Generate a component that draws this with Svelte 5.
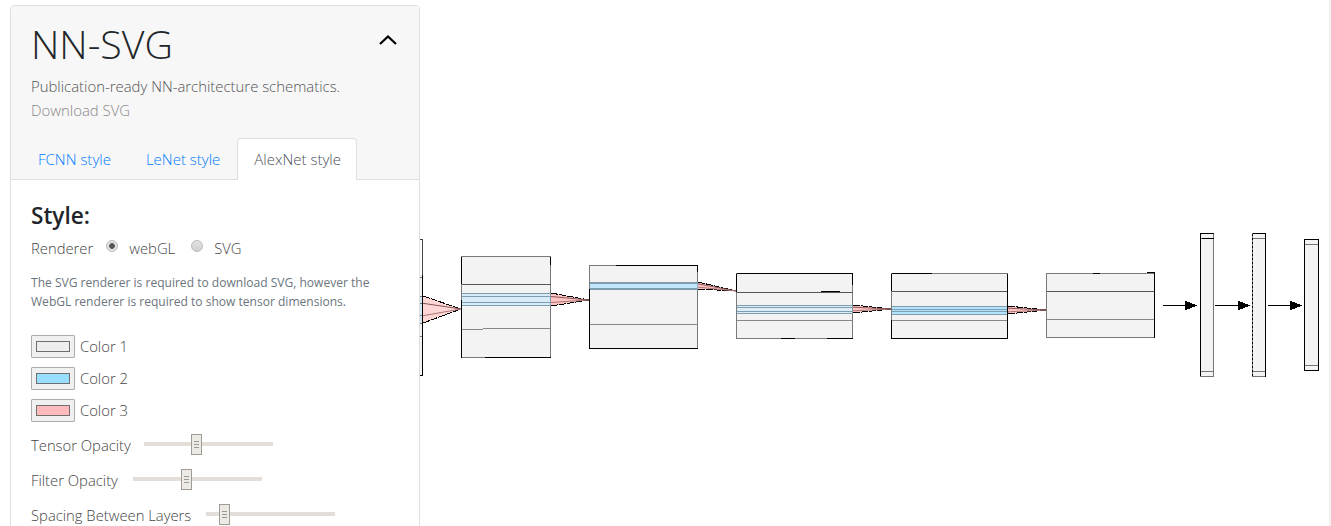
<script>
  let renderer = $state('webGL');

  const colors = [
    { label: 'Color 1', value: '#eeeeee' },
    { label: 'Color 2', value: '#99ddff' },
    { label: 'Color 3', value: '#ffbbbb' }
  ];

  const sliders = [
    { label: 'Tensor Opacity', width: 99, pos: 47 },
    { label: 'Filter Opacity', width: 88, pos: 48 },
    { label: 'Spacing Between Layers', width: 161, pos: 13 }
  ];

  // frame, inner lines, blue band, and `ink` = the stretches webGL drew in full black
  const layers = [
    {
      x: 461.5, y: 256.5, w: 89, h: 101,
      lines: [[284.5, '#555']],
      band: [293.5, 305.5, 296.5, 302.5], tint: 0.3,
      ink: 'M461.5 256.5V284M550.5 256.5V265M485 357.5H550.5M461.5 300V357.5',
      extra: 'M461.5 329.5H483M483 328.5H550.5'
    },
    {
      x: 589.5, y: 265.5, w: 108, h: 83,
      lines: [[324.5, '#888']],
      band: [282.5, 289.5, 283.5, 288.5], tint: 0.55,
      ink: 'M616 265.5H697.5V272M589.5 348.5H697.5M589.5 289V348.5'
    },
    {
      x: 736.5, y: 273.5, w: 116, h: 65,
      lines: [[292.5, '#555'], [320.5, '#888']],
      band: [305.5, 313.5, 307.5, 311.5], tint: 0.25,
      ink: 'M736.5 273.5H852.5V285M736.5 273.5V292M821 291.5H840M827 338.5H852.5M781 338.5H795'
    },
    {
      x: 891.5, y: 273.5, w: 116, h: 65,
      lines: [[291.5, '#555'], [320.5, '#888']],
      band: [306.5, 314.5, 309.5, 311.5], tint: 0.7,
      ink: 'M891.5 273.5H932M1007.5 273.5V338.5H891.5M891.5 273.5V291M891.5 320V338.5'
    },
    {
      x: 1046.5, y: 273.5, w: 108, h: 64,
      lines: [[291.5, '#555'], [319.5, '#888']],
      ink: 'M1147 272.5H1154.5V337.5M1093 273.5H1100'
    }
  ];

  const bars = [
    { x: 1200.5, y: 233.5, w: 13, h: 143, lines: [238.5, 371.5], ink: 'M1200.5 376V233.5H1213.5M1202 238.5H1213.5' },
    { x: 1252.5, y: 233.5, w: 13, h: 143, lines: [238.5, 371.5], ink: 'M1252.5 233.5H1265.5V376.5', dashed: true },
    { x: 1304.5, y: 239.5, w: 14, h: 131, lines: [244.5, 365.5], ink: 'M1304.5 370.5V239.5H1318.5V370.5H1304.5' }
  ];

  const filters = [
    [423, 296, 323, 461, 309, 0.6],
    [551, 293, 306, 589, 300, 0.85],
    [698, 282, 289, 736, 291, 0.85],
    [853, 305, 313, 891, 309, 0.85],
    [1008, 306, 314, 1046, 310, 0.85]
  ];

  const arrows = [
    [1163, 1197],
    [1215, 1250],
    [1268, 1302]
  ];
</script>

<div class="page">
  <svg class="network" width="1331" height="526" viewBox="0 0 1331 526" shape-rendering="crispEdges">
    <!-- first layer, mostly behind the card -->
    <rect x="380" y="275" width="42.5" height="100" fill="#f3f3f3" />
    <rect x="415" y="296" width="8" height="27" fill="#d5e9f5" />
    <path d="M420 239H422.5V275" fill="none" stroke="#444" />
    <path d="M422.5 275V375H420" fill="none" stroke="#000" />
    <path d="M419 277.5H422M419 296H422M419 303.5H422M419 315.5H422M419 323.5H422M419 336.5H422" stroke="#777" />

    {#each filters as [x, y1, y2, ax, ay, tint]}
      <polygon points="{x},{y1} {ax},{ay} {x},{y2}" fill="#ffbbbb" fill-opacity={tint} shape-rendering="auto" />
      <line x1={x} y1={y1} x2={ax} y2={ay} stroke="#000" stroke-dasharray="7 1" />
      <line x1={x} y1={y2} x2={ax} y2={ay} stroke="#000" stroke-dasharray="7 1" />
      <line x1={x} y1={y1 + (y2 - y1) * 0.27} x2={ax} y2={ay} stroke="#855" shape-rendering="auto" />
      <line x1={x} y1={y1 + (y2 - y1) * 0.73} x2={ax} y2={ay} stroke="#a77" shape-rendering="auto" />
    {/each}

    {#each layers as l}
      <rect x={l.x} y={l.y} width={l.w} height={l.h} fill="#f3f3f3" stroke="#7a7a7a" />
      {#if l.band}
        <rect x={l.x} y={l.band[0]} width={l.w} height={l.band[1] - l.band[0]} fill="#99ddff" fill-opacity={l.tint} />
        {#each l.band as y}
          <line x1={l.x} x2={l.x + l.w} y1={y} y2={y} stroke="#7f9db0" />
        {/each}
      {/if}
      {#each l.lines as [y, tone]}
        <line x1={l.x} x2={l.x + l.w} y1={y} y2={y} stroke={tone} />
      {/each}
      {#if l.extra}
        <path d={l.extra} fill="none" stroke="#888" />
      {/if}
      <path d={l.ink} fill="none" stroke="#000" />
    {/each}

    {#each bars as b}
      <rect x={b.x} y={b.y} width={b.w} height={b.h} fill="#f3f3f3" stroke="#777" />
      {#each b.lines as y}
        <line x1={b.x} x2={b.x + b.w} y1={y} y2={y} stroke="#777" />
      {/each}
      <path d={b.ink} fill="none" stroke="#000" />
      {#if b.dashed}
        <line x1={b.x} x2={b.x} y1={b.y} y2={b.y + b.h} stroke="#000" stroke-dasharray="2 2" />
      {/if}
    {/each}

    {#each arrows as [x1, x2]}
      <line {x1} {x2} y1="305.5" y2="305.5" stroke="#000" />
      <polygon points="{x2 - 12},301 {x2 - 8},302 {x2},305.5 {x2 - 8},309 {x2 - 12},310" fill="#000" />
    {/each}
  </svg>

  <div class="card">
    <header class="card-head">
      <div class="title-row">
        <h1>NN-SVG</h1>
        <svg class="chevron" width="20" height="12" viewBox="0 0 20 12">
          <path d="M2 10L10 2.5L18 10" fill="none" stroke="#000" stroke-width="2.2" />
        </svg>
      </div>
      <p class="lead">Publication-ready NN-architecture schematics.</p>
      <p class="download">Download SVG</p>
      <nav class="tabs">
        <span class="tab">FCNN style</span>
        <span class="tab">LeNet style</span>
        <span class="tab active">AlexNet style</span>
      </nav>
    </header>
    <section class="card-body">
      <h4>Style:</h4>
      <div class="renderer">
        <span>Renderer</span>
        {#each ['webGL', 'SVG'] as option}
          <label class="radio">
            <input type="radio" name="renderer" value={option} bind:group={renderer} />
            <span>{option}</span>
          </label>
        {/each}
      </div>
      <p class="note">The SVG renderer is required to download SVG, however the WebGL renderer is required to show tensor dimensions.</p>
      {#each colors as c}
        <div class="color-row">
          <span class="swatch"><span class="swatch-fill" style="background: {c.value}"></span></span>
          <span>{c.label}</span>
        </div>
      {/each}
      <div class="sliders">
        {#each sliders as s}
          <div class="slider-row">
            <span class="slider-label" style="width: {s.width}px">{s.label}</span>
            <span class="track"><span class="thumb" style="left: {s.pos}px"><i></i><i></i><i></i></span></span>
          </div>
        {/each}
      </div>
    </section>
  </div>
</div>

<style>
  :global(body) {
    margin: 0;
    background: #fff;
  }
  .page {
    position: relative;
    height: 526px;
    overflow: hidden;
    padding: 5px 0 0 10px;
    box-sizing: border-box;
    border-right: 2px solid #f1f1f1;
    font-family: "Open Sans", sans-serif;
    font-weight: 300;
    color: #212529;
  }
  .network {
    position: absolute;
    top: 0;
    left: 0;
  }
  .card {
    position: relative;
    width: 410px;
    box-sizing: border-box;
    border: 1px solid #dfdfdf;
    border-radius: 4px;
    background: #fff;
    height: 560px;
  }
  .card-head {
    background: #f7f7f7;
    border-bottom: 1px solid #dfdfdf;
    padding: 12px 20px 0;
    height: 174px;
    box-sizing: border-box;
    border-radius: 3px 3px 0 0;
  }
  .title-row {
    display: flex;
    justify-content: space-between;
    align-items: center;
    height: 52px;
  }
  .chevron {
    margin: -9px 1px 0 0;
  }
  h1 {
    margin: 0;
    font-size: 39.3px;
    font-weight: 300;
    line-height: 52px;
  }
  .lead, .download {
    margin: 0;
    font-size: 14.9px;
    line-height: 24px;
    color: #555;
  }
  .lead {
    margin-top: 4px;
  }
  .download {
    color: #888;
  }
  .tabs {
    display: flex;
    margin: 16px 0 0 -10px;
    font-size: 15px;
  }
  .tab {
    padding: 0 17px;
    height: 41px;
    line-height: 43px;
    color: #007bff;
    box-sizing: border-box;
  }
  .tab:first-child {
    padding-right: 18px;
  }
  .tab.active {
    height: 42px;
    line-height: 41px;
    color: #495057;
    background: #fff;
    border: 1px solid #dfdfdf;
    border-bottom: 0;
    border-radius: 4px 4px 0 0;
    padding: 0 15px 0 16px;
  }
  .card-body {
    padding: 20px;
    font-size: 14.8px;
    color: #444;
  }
  h4 {
    margin: -1px 0 0;
    font-size: 22.6px;
    font-weight: 600;
    line-height: 34px;
    color: #212529;
  }
  .renderer {
    display: flex;
    align-items: center;
    gap: 13px;
    height: 24px;
    margin-top: 3px;
  }
  .radio {
    display: flex;
    align-items: center;
    gap: 11px;
  }
  .radio + .radio {
    margin-left: 3px;
  }
  .radio input {
    appearance: none;
    display: block;
    position: relative;
    top: -2px;
    margin: 0;
    width: 12px;
    height: 12px;
    border: 1px solid #bbb;
    border-radius: 50%;
    background: linear-gradient(#e4e4e4, #cfcfcf);
    box-sizing: border-box;
  }
  .radio input:checked {
    background: radial-gradient(circle, #555 0 2.5px, #e2e2e2 3.2px);
  }
  .note {
    margin: 13px 0 23px;
    font-size: 12.05px;
    line-height: 19px;
    color: #6c757d;
    font-weight: 400;
  }
  .color-row {
    display: flex;
    align-items: center;
    gap: 5px;
    height: 24px;
    margin-bottom: 8px;
  }
  .swatch {
    display: flex;
    width: 44px;
    height: 23px;
    box-sizing: border-box;
    padding: 5px 4px;
    border: 1px solid #adadad;
    border-radius: 1px;
    background: #f0f0f0;
  }
  .swatch-fill {
    flex: 1;
    border: 1px solid #6f6f6f;
  }
  .sliders {
    padding-top: 2px;
  }
  .slider-row {
    display: flex;
    align-items: center;
    gap: 14px;
    height: 24px;
    margin-bottom: 11px;
  }
  .slider-label {
    padding-top: 2px;
    white-space: nowrap;
  }
  .track {
    position: relative;
    width: 129px;
    height: 4px;
    background: #e3dfd8;
  }
  .thumb {
    position: absolute;
    top: -8px;
    width: 11px;
    height: 21px;
    box-sizing: border-box;
    border: 1px solid #a09b94;
    background: #ede9e4;
    display: flex;
    flex-direction: column;
    justify-content: center;
    align-items: center;
    gap: 2px;
  }
  .thumb i {
    display: block;
    width: 5px;
    height: 1px;
    background: #999;
  }
</style>
